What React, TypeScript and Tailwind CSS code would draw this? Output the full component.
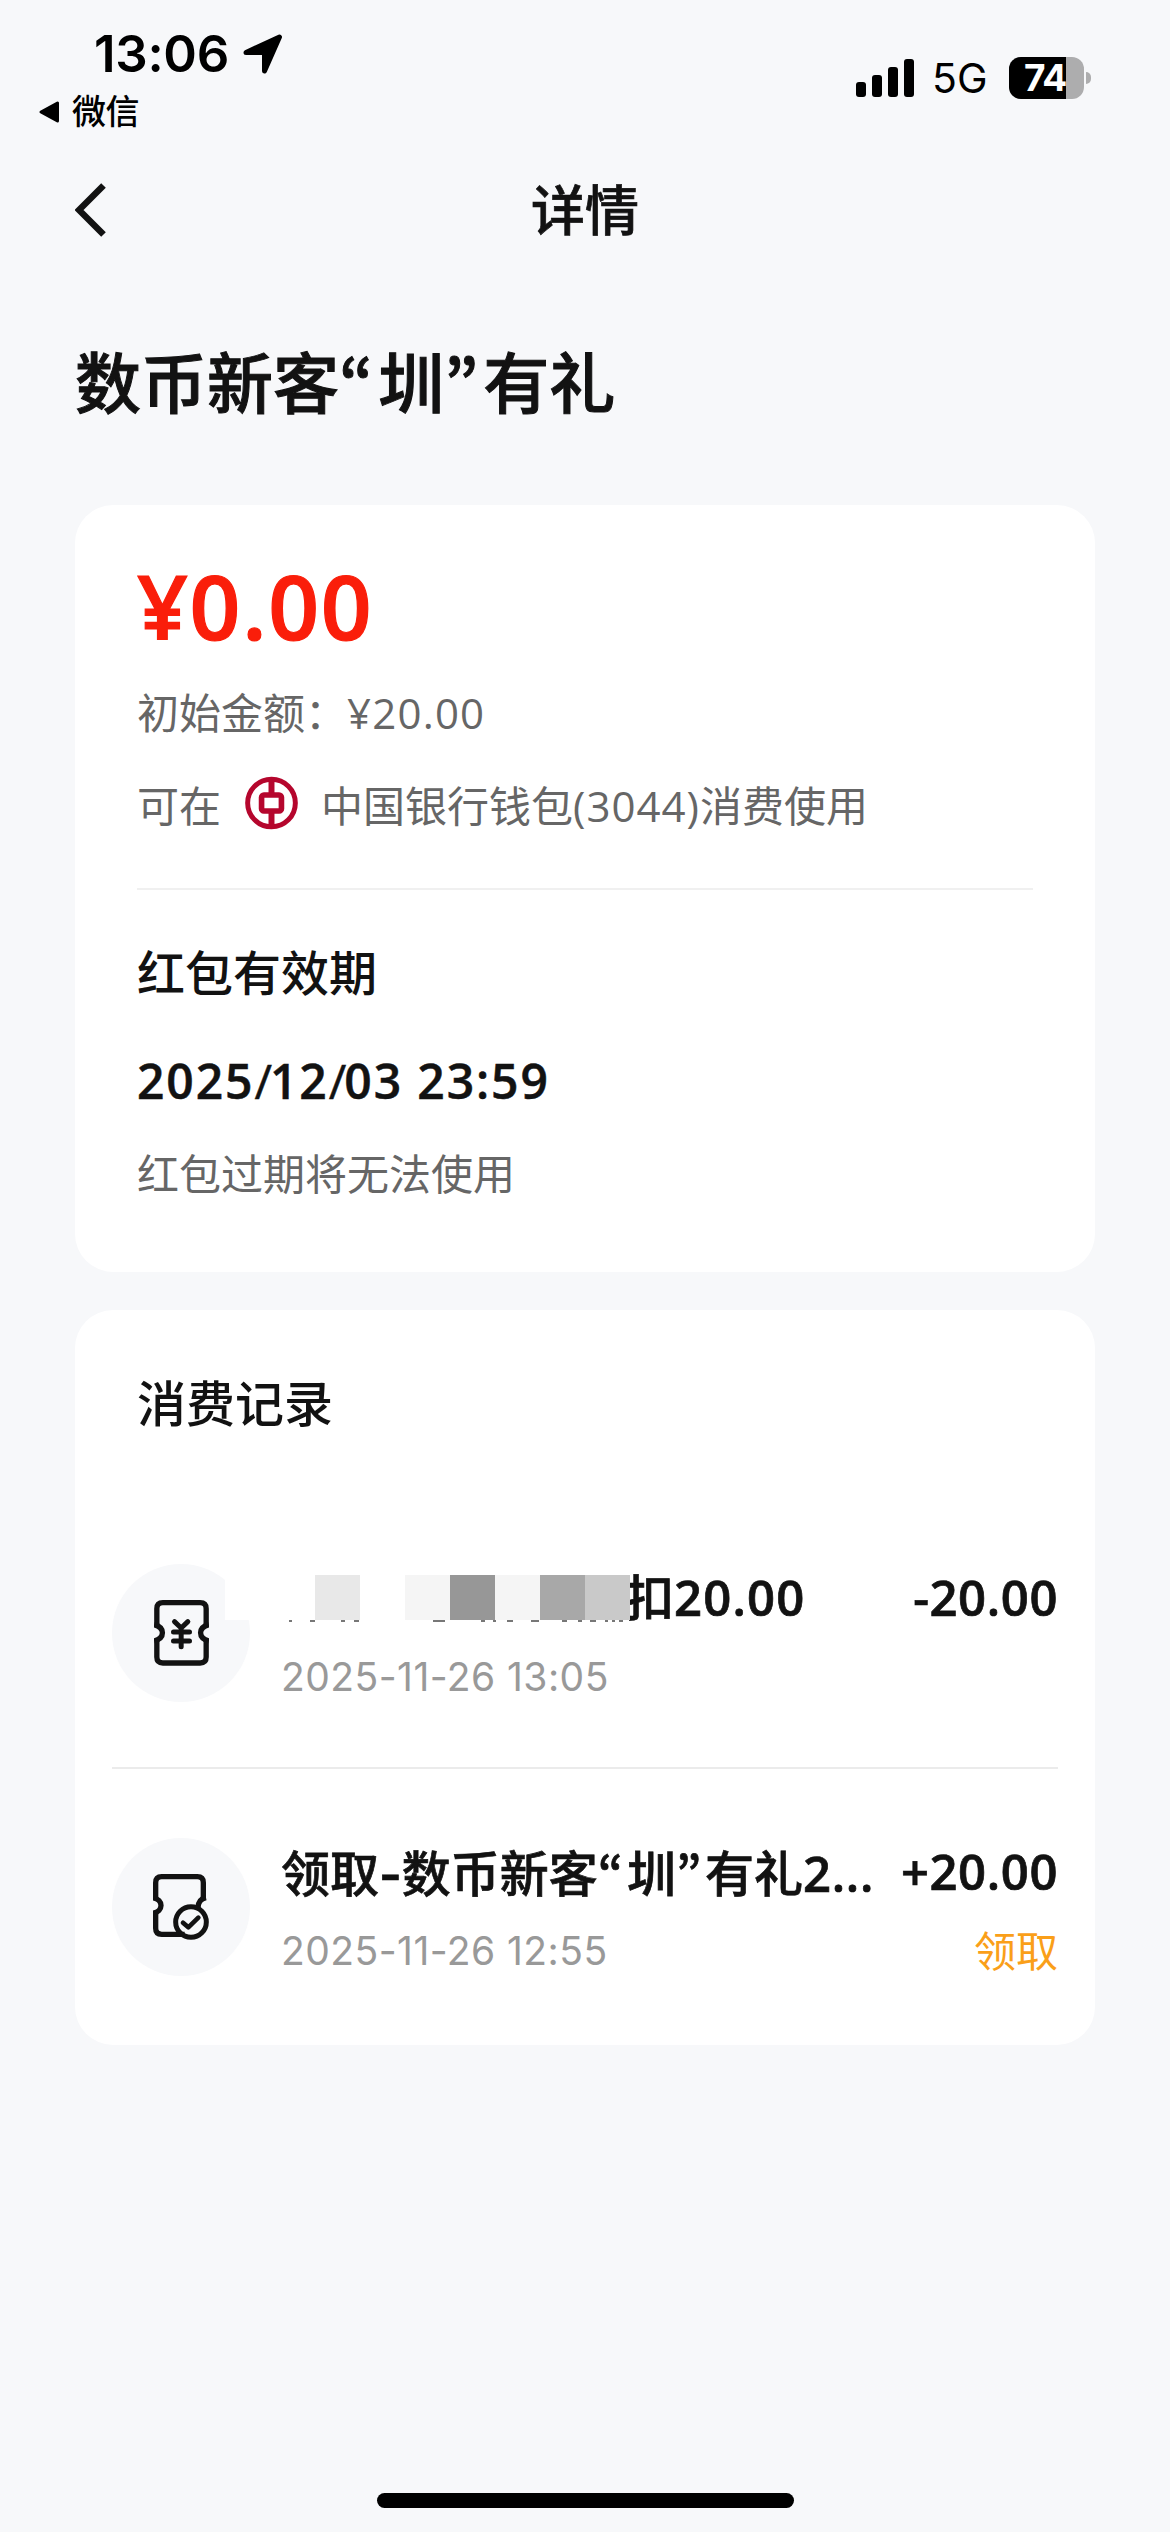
import type { ReactNode } from "react";

interface RecordItem {
  id: string;
  title: ReactNode;
  time: string;
  amount: string;
  tag?: string;
  icon: ReactNode;
  masked?: boolean;
}

const TicketYuanIcon = () => (
  <svg
    viewBox="280 930 164 198"
    className="w-[55px] h-[66px]"
    fill="none"
    stroke="#121212"
    strokeWidth="16"
  >
    <path d="M280 1004C313 1012 313 1045 280 1053" />
    <path d="M444 1004C411 1012 411 1045 444 1053" />
    <path d="M288 1010V956Q288 938 306 938H418Q436 938 436 956V1010" />
    <path d="M288 1047V1101Q288 1119 306 1119H418Q436 1119 436 1101V1047" />
    <path
      d="M341 995L361 1014L381 995M361 1014V1070M338 1026H386M338 1053H386"
      strokeLinecap="round"
      strokeLinejoin="round"
      strokeWidth="15"
    />
  </svg>
);

const TicketCheckIcon = () => (
  <svg
    viewBox="277 222 168 198"
    className="w-[56px] h-[66px]"
    fill="none"
    stroke="#121212"
    strokeWidth="16"
  >
    <path d="M277 293C309 299 309 334 277 340" />
    <path d="M285 300V248Q285 230 303 230H410Q428 230 428 248V300" />
    <path d="M436 293Q412 298 412 324" />
    <path d="M285 333V385Q285 403 303 403H372" />
    <circle cx="391" cy="366" r="46" strokeWidth="15" />
    <path
      d="M367 368L383 382L413 353"
      strokeLinecap="round"
      strokeLinejoin="round"
      strokeWidth="14"
    />
  </svg>
);

const BankLogo = () => (
  <svg
    viewBox="555 708 160 162"
    className="w-[53px] h-[54px] mb-[6px]"
    fill="none"
    stroke="#b5062d"
  >
    <circle cx="635" cy="789" r="72" strokeWidth="15" />
    <path d="M635 718V760M635 818V860" strokeWidth="18" />
    <rect x="605" y="765" width="60" height="48" rx="7" strokeWidth="17" />
  </svg>
);

// Proportional curly quotes, the SC face only has full-width ones
const Quote = ({ children }: { children: string }) => (
  <span className="font-['Noto_Sans_CJK_KR'] tracking-[0.075em]">{children}</span>
);

const Slash = () => <span className="font-normal tracking-[-2px]">/</span>;

const mosaic = [
  { id: 1, className: "w-[90px] bg-white" },
  { id: 2, className: "w-[45px] bg-[#e8e8e8]" },
  { id: 3, className: "w-[45px] bg-white" },
  { id: 4, className: "w-[45px] bg-[#f5f5f5]" },
  { id: 5, className: "w-[45px] bg-[#979797]" },
  { id: 6, className: "w-[45px] bg-[#f5f5f5]" },
  { id: 7, className: "w-[45px] bg-[#a8a8a8]" },
  { id: 8, className: "w-[45px] bg-[#c9c9c9]" },
];

const records: RecordItem[] = [
  {
    id: "1",
    title: (
      <span className="pl-[344px]">
        扣<span className="font-semibold tracking-[1.200px]">20.00</span>
      </span>
    ),
    time: "2025-11-26 13:05",
    amount: "-20.00",
    icon: <TicketYuanIcon />,
    masked: true,
  },
  {
    id: "2",
    title: (
      <>
        领取<span className="font-['Inter'] font-semibold">-</span>数币新客
        <Quote>“</Quote>圳<Quote>”</Quote>有礼
        <span className="font-semibold tracking-[0.700px]">2...</span>
      </>
    ),
    time: "2025-11-26 12:55",
    amount: "+20.00",
    tag: "领取",
    icon: <TicketCheckIcon />,
  },
];

const StatusBar = () => (
  <div className="h-[160px] flex justify-between text-black font-['Inter','Noto_Sans_CJK_SC',sans-serif]">
    <div className="pt-[24px] pl-[38px]">
      <div className="flex items-center h-[60px] pl-[56px]">
        <span className="text-[51px] leading-[60px] font-semibold tracking-[-0.300px]">13:06</span>
        <svg viewBox="0 0 40 40" className="w-[40px] h-[40px] ml-[14px]">
          <path
            d="M3 18.500L36.500 3L21.500 37V20Q21.500 18.500 20 18.500Z"
            fill="black"
            stroke="black"
            strokeWidth="5"
            strokeLinejoin="round"
          />
        </svg>
      </div>
      <div className="flex items-center h-[50px] mt-[3px]">
        <svg viewBox="0 0 22 24" className="w-[22px] h-[24px]">
          <path d="M3 12L19.500 3V21Z" stroke="black" strokeWidth="3" strokeLinejoin="round" />
        </svg>
        <span className="text-[34px] leading-[50px] ml-[12px] font-medium tracking-[-0.500px]">
          微信
        </span>
      </div>
    </div>
    <div className="flex items-center h-[42px] mt-[57px] mr-[79px]">
      <div className="flex items-end gap-[6px] h-[38px]">
        <div className="w-[10px] h-[15px] rounded-[3px] bg-black" />
        <div className="w-[10px] h-[22px] rounded-[3px] bg-black" />
        <div className="w-[10px] h-[30px] rounded-[3px] bg-black" />
        <div className="w-[10px] h-[38px] rounded-[3px] bg-black" />
      </div>
      <span className="text-[41px] leading-[42px] ml-[18px] w-[77px]">5G</span>
      <div className="relative flex w-[75px] h-[42px] rounded-[12px] bg-[#adadae]">
        <div className="w-[57px] h-full rounded-l-[12px] bg-black" />
        <span className="absolute left-[15px] top-0 text-[37px] leading-[42px] font-bold text-white tracking-[-1px]">
          74
        </span>
      </div>
      <div className="w-[5px] h-[12px] ml-[2px] rounded-r-full bg-[#adadae]" />
    </div>
  </div>
);

const RecordRow = ({ item }: { item: RecordItem }) => (
  <div className="relative flex h-[138px]">
    <div className="w-[138px] h-[138px] shrink-0 rounded-full bg-[#f7f8fa] flex items-center justify-center">
      {item.icon}
    </div>
    <div className="flex-1 pl-[31px] pt-[3px]">
      <div className="flex justify-between h-[60px] leading-[60px] text-[49px] whitespace-nowrap">
        <span className="font-medium [-webkit-text-stroke:0.7px]">{item.title}</span>
        <span className="font-semibold tracking-[0.600px] [-webkit-text-stroke:0.7px]">
          {item.amount}
        </span>
      </div>
      <div className="flex justify-between h-[50px] mt-[25px] leading-[50px]">
        <span className="font-['Inter'] text-[39px] tracking-[0.450px] text-[#999999]">
          {item.time}
        </span>
        <span className="text-[42px] text-[#fa9f19]">{item.tag}</span>
      </div>
    </div>
    {item.masked && (
      <div className="absolute left-[113px] top-[11px]">
        <div className="flex h-[45px]">
          {mosaic.map((m) => (
            <div key={m.id} className={`h-full ${m.className}`} />
          ))}
        </div>
        <svg viewBox="0 0 405 2" className="block w-[405px] h-[2px]">
          <path
            d="M64 1h3M85 1h5M116 1h4M129 1h5M208 1h12M256 1h4M268 1h3M282 1h6M306 1h8M337 1h5M353 1h4M365 1h6M380 1h3M387 1h3M394 1h4"
            stroke="#777777"
            strokeWidth="2"
          />
        </svg>
      </div>
    )}
  </div>
);

export default function App() {
  return (
    <div className="w-[1170px] h-[2532px] flex flex-col bg-[#f7f8fa] text-[#121212] font-['Open_Sans','Noto_Sans_CJK_SC',sans-serif]">
      <StatusBar />

      <div className="grid grid-cols-3 items-center h-[100px] px-[75px]">
        <svg viewBox="0 0 32 54" className="w-[32px] h-[54px]" fill="none">
          <path d="M28.500 2.500L4 27L28.500 51.500" stroke="#121212" strokeWidth="6.500" />
        </svg>
        <h1 className="text-center text-[54px] leading-[100px] font-medium [-webkit-text-stroke:0.7px]">
          详情
        </h1>
      </div>

      <h2 className="mt-[69px] h-[100px] pl-[75px] text-[66px] leading-[100px] font-medium [-webkit-text-stroke:1px]">
        数币新客<Quote>“</Quote>圳<Quote>”</Quote>有礼
      </h2>

      <div className="mt-[76px] mx-[75px] h-[767px] px-[62px] pt-[46px] rounded-[38px] bg-white">
        <div className="h-[110px] text-[89px] leading-[110px] font-semibold tracking-[1.700px] text-[#fa1e0a] [-webkit-text-stroke:1.2px]">
          ¥0.00
        </div>
        <div className="mt-[22px] h-[60px] text-[42px] leading-[60px] text-[#666666]">
          初始金额：<span className="tracking-[1.200px]">¥20.00</span>
        </div>
        <div className="flex items-center mt-[33px] h-[60px] text-[42px] leading-[60px] text-[#666666]">
          <span>可在</span>
          <span className="ml-[24px] mr-[23px]">
            <BankLogo />
          </span>
          <span>
            中国银行钱包<span className="tracking-[1px]">(3044)</span>消费使用
          </span>
        </div>
        <div className="mt-[52px] h-[2px] bg-[#f0f0f0]" />
        <div className="mt-[53px] h-[60px] text-[48px] leading-[60px] font-medium">红包有效期</div>
        <div className="mt-[48px] h-[60px] text-[48px] leading-[60px] font-semibold tracking-[1.900px] [-webkit-text-stroke:0.5px]">
          2025
          <Slash />
          12
          <Slash />
          03 23:59
        </div>
        <div className="mt-[33px] h-[60px] text-[42px] leading-[60px] text-[#666666]">
          红包过期将无法使用
        </div>
      </div>

      <div className="mt-[38px] mx-[75px] h-[735px] pl-[37px] pr-[37px] pt-[63px] rounded-[38px] bg-white">
        <div className="pl-[25px] h-[60px] text-[49px] leading-[60px] font-medium">消费记录</div>
        <div className="mt-[131px]">
          <RecordRow item={records[0]} />
          <div className="mt-[65px] mb-[69px] h-[2px] bg-[#ebebeb]" />
          <RecordRow item={records[1]} />
        </div>
      </div>

      <div className="mt-auto mb-[24px] mx-auto w-[417px] h-[15px] rounded-full bg-black" />
    </div>
  );
}
